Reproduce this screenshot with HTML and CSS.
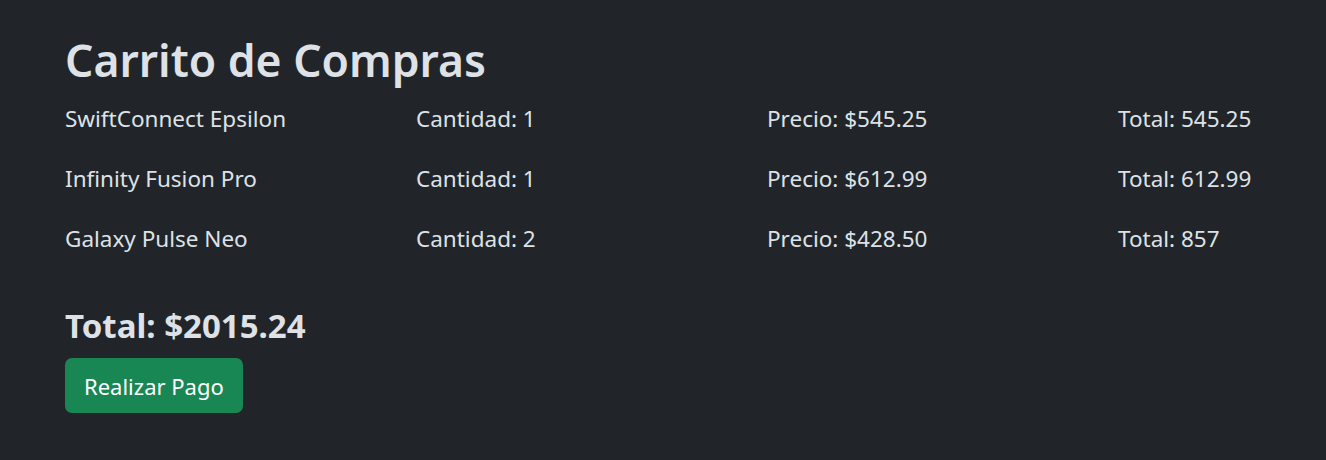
FILE: index.html
```html
<!DOCTYPE html>
<html lang="es">
<head>
<meta charset="utf-8">
<title>Carrito de Compras</title>
<link rel="stylesheet" href="styles.css">
</head>
<body>
<main class="cart">
  <h1 class="cart-title">Carrito de Compras</h1>
  <ul class="cart-list">
    <li class="cart-item">
      <span class="cell">SwiftConnect Epsilon</span>
      <span class="cell">Cantidad: 1</span>
      <span class="cell">Precio: $545.25</span>
      <span class="cell">Total: 545.25</span>
    </li>
    <li class="cart-item">
      <span class="cell">Infinity Fusion Pro</span>
      <span class="cell">Cantidad: 1</span>
      <span class="cell">Precio: $612.99</span>
      <span class="cell">Total: 612.99</span>
    </li>
    <li class="cart-item">
      <span class="cell">Galaxy Pulse Neo</span>
      <span class="cell">Cantidad: 2</span>
      <span class="cell">Precio: $428.50</span>
      <span class="cell">Total: 857</span>
    </li>
  </ul>
  <h3 class="cart-total">Total: $2015.24</h3>
  <button class="btn-pay" type="button">Realizar Pago</button>
</main>
</body>
</html>
```

FILE: styles.css
```css
html, body {
  margin: 0;
  padding: 0;
  background: #212529;
  color: #dee2e6;
  font-family: "Noto Sans", "Open Sans", sans-serif;
  overflow: hidden;
}

.cart {
  padding: 33px 0 0 65px;
}

.cart-title {
  margin: 0 0 2px;
  font-size: 44.5px;
  font-weight: 600;
  line-height: 54px;
}

.cart-list {
  list-style: none;
  margin: 0;
  padding: 0;
}

.cart-item {
  display: grid;
  grid-template-columns: repeat(4, 351px);
  height: 60px;
  align-items: center;
  font-size: 22.5px;
  line-height: 30px;
}

.cell {
  white-space: nowrap;
}

.cart-total {
  margin: 38px 0 13px;
  font-size: 33px;
  font-weight: 700;
  line-height: 38px;
}

.btn-pay {
  display: block;
  height: 55px;
  padding: 0 19px;
  border: 0;
  border-radius: 7px;
  background: #198754;
  color: #fff;
  font-family: inherit;
  font-size: 22px;
  line-height: 30px;
}
```
